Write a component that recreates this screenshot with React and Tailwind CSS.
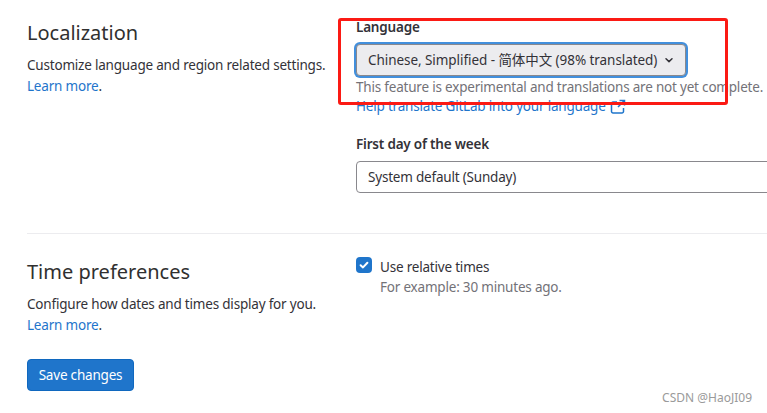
import React from "react";

function Chevron() {
  return (
    <svg width="16" height="16" viewBox="0 0 16 16" className="shrink-0">
      <path d="M5 6.8 8 9.6 11 6.8" fill="none" stroke="#333238" strokeWidth="1.5" strokeLinecap="round" strokeLinejoin="round" />
    </svg>
  );
}

function External() {
  return (
    <svg width="16" height="16" viewBox="0 0 16 16" className="shrink-0 ml-[4px]">
      <path d="M7 3H3a1.5 1.5 0 0 0-1.5 1.5v8A1.5 1.5 0 0 0 3 14h9a1.5 1.5 0 0 0 1.5-1.5V9" fill="none" stroke="#1f75cb" strokeWidth="1.5" />
      <path d="M9.5 1.5h5v5M14.2 1.8 8 8" fill="none" stroke="#1f75cb" strokeWidth="1.5" />
    </svg>
  );
}

export default function App() {
  return (
    <div className="relative w-[767px] h-[413px] overflow-hidden bg-white text-[13.5px] text-[#333238] font-['Noto_Sans','Noto_Sans_CJK_SC',sans-serif] tracking-[-0.2px]">
      <div className="flex pl-[27px] pt-[19px] h-[233px]">
        <div className="w-[329px] shrink-0">
          <h2 className="text-[20px] leading-[28px] font-normal tracking-normal text-[#303030] mb-[8px]">Localization</h2>
          <p className="leading-[21px] whitespace-nowrap">Customize language and region related settings.</p>
          <p className="leading-[21px]"><a className="text-[#1f75cb]">Learn more</a>.</p>
        </div>
        <div className="flex-1 min-w-0 -mt-[2px]">
          <label className="block font-semibold leading-[20px] whitespace-nowrap">Language</label>
          <div className="mt-[7px] w-[330px] h-[32px] rounded-[4px] bg-[#ececef] border border-[#89888d] ring-2 ring-[#428fdc] flex items-center justify-between pl-[11px] pr-[8px] whitespace-nowrap">
            <span className="tracking-[-0.06px]">Chinese, Simplified - 简体中文 (98% translated)</span>
            <Chevron />
          </div>
          <p className="mt-[2px] leading-[19px] text-[#737278] whitespace-nowrap">This feature is experimental and translations are not yet complete.</p>
          <p className="leading-[19px] text-[#1f75cb] whitespace-nowrap flex items-center">Help translate GitLab into your language<External /></p>
          <label className="block font-semibold leading-[20px] mt-[18px] whitespace-nowrap">First day of the week</label>
          <div className="mt-[7px] w-[440px] h-[32px] rounded-[4px] bg-white border border-[#89888d] flex items-center pl-[11px] whitespace-nowrap">System default (Sunday)</div>
        </div>
      </div>
      <div className="ml-[27px] border-t border-[#ececef]" />
      <div className="flex pl-[27px] pt-[24px]">
        <div className="w-[329px] shrink-0">
          <h2 className="text-[20px] leading-[28px] font-normal tracking-normal text-[#303030] mb-[8px]">Time preferences</h2>
          <p className="leading-[21px] whitespace-nowrap">Configure how dates and times display for you.</p>
          <p className="leading-[21px]"><a className="text-[#1f75cb]">Learn more</a>.</p>
          <button className="mt-[23px] w-[107px] h-[32px] rounded-[4px] bg-[#1f75cb] text-white border border-[#1068bf] flex items-center justify-center">Save changes</button>
        </div>
        <div className="flex gap-[8px] -mt-px">
          <span className="w-[16px] h-[16px] rounded-[4px] bg-[#1f75cb] flex items-center justify-center shrink-0">
            <svg width="16" height="16" viewBox="0 0 16 16"><path d="M4.6 8.2 7 10.4 11.4 5.8" fill="none" stroke="#fff" strokeWidth="2" strokeLinecap="round" strokeLinejoin="round" /></svg>
          </span>
          <div className="whitespace-nowrap">
            <div className="leading-[20px]">Use relative times</div>
            <div className="leading-[20px] text-[#737278]">For example: 30 minutes ago.</div>
          </div>
        </div>
      </div>
      <div className="absolute left-[338px] top-[18px] w-[390px] h-[87px] border-[3px] border-[#fb1a14] rounded-[3px]" />
      <div className="absolute right-[15px] top-[391px] text-[12px] leading-[14px] tracking-normal text-[#9a9a9a]">CSDN @HaoJI09</div>
    </div>
  );
}
